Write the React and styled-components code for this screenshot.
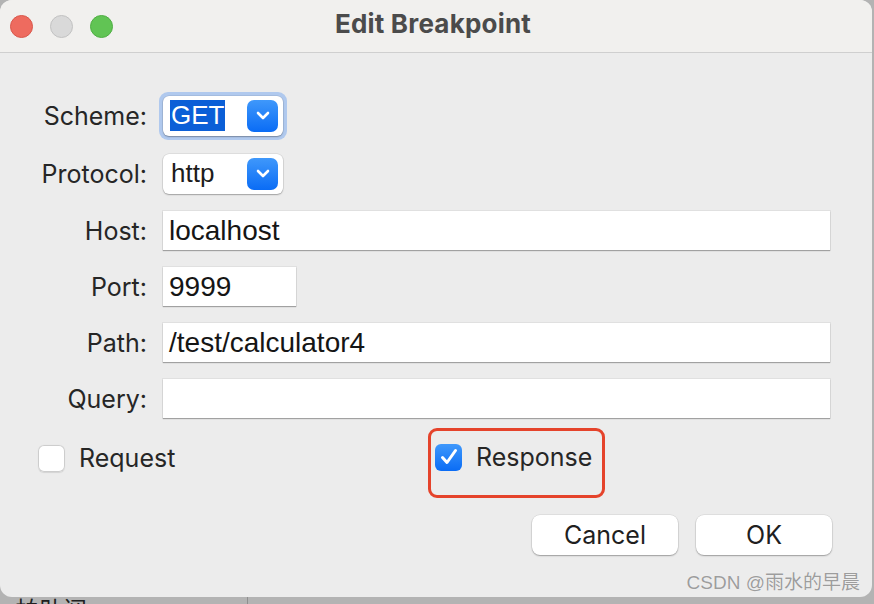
import styled, { createGlobalStyle } from "styled-components";

const GlobalStyle = createGlobalStyle`
  html, body {
    margin: 0;
    padding: 0;
    background: #b3b3b3;
  }
  * {
    box-sizing: border-box;
  }
`;

const Screen = styled.div`
  width: 874px;
  height: 604px;
  overflow: hidden;
  display: flex;
  flex-direction: column;
  background: #b3b3b3;
  font-family: Inter, "Liberation Sans", sans-serif;
`;

const Window = styled.div`
  position: relative;
  width: 872px;
  height: 597px;
  flex-shrink: 0;
  background: #ececec;
  border-radius: 12px;
  overflow: hidden;
  display: flex;
  flex-direction: column;
`;

const TitleBar = styled.div`
  height: 53px;
  flex-shrink: 0;
  display: grid;
  grid-template-columns: 1fr auto 1fr;
  align-items: center;
  background: #f1f0ee;
  border-bottom: 1px solid #cfcfcf;
  padding: 0 10px;
`;

const Lights = styled.div`
  display: flex;
  gap: 17px;
  align-items: center;
`;

const Light = styled.span`
  width: 23px;
  height: 23px;
  border-radius: 50%;
  background: ${(p) => p.$bg};
  border: 1px solid ${(p) => p.$edge};
`;

const Title = styled.div`
  font-size: 26px;
  font-weight: 700;
  color: #4b4b4b;
  margin-top: -5px;
  margin-left: -6px;
  letter-spacing: 0.2px;
`;

const Form = styled.div`
  display: grid;
  grid-template-columns: 131px 667px;
  column-gap: 16px;
  row-gap: 17px;
  padding: 42px 0 0 16px;
  align-items: center;
`;

const Label = styled.label`
  font-size: 25px;
  color: #262626;
  text-align: right;
  white-space: nowrap;
`;

const Control = styled.div`
  height: ${(p) => p.$h || 39}px;
  display: flex;
  align-items: center;
`;

const FocusRing = styled.div`
  display: flex;
  padding: 4px;
  margin: -4px;
  border-radius: 9px;
  background: ${(p) => (p.$focus ? "#b0c9ee" : "transparent")};
`;

const PopUp = styled.div`
  width: 120px;
  height: 40px;
  background: #fff;
  border-radius: 6px;
  box-shadow: 0 1px 1.5px rgba(0, 0, 0, 0.28), 0 0 0 0.5px rgba(0, 0, 0, 0.12);
  display: flex;
  align-items: center;
  justify-content: space-between;
  padding: 0 5px 0 7px;
`;

const PopText = styled.span`
  font-family: "Liberation Sans", Arial, sans-serif;
  font-size: 26px;
  line-height: 31px;
  color: ${(p) => (p.$selected ? "#fff" : "#1c1c1c")};
  background: ${(p) => (p.$selected ? "#0b5fd7" : "transparent")};
  padding: 0 1px;
`;

const Chevron = styled.span`
  width: 31px;
  height: 32px;
  border-radius: 7px;
  background: linear-gradient(#3f98fb, #0a6cf5);
  display: flex;
  align-items: center;
  justify-content: center;
`;

const Field = styled.div`
  width: ${(p) => p.$w || "100%"};
  height: 39px;
  background: #fff;
  box-shadow: 0 1px 1px rgba(0, 0, 0, 0.28), 0 0 0 1px rgba(0, 0, 0, 0.05);
  display: flex;
  align-items: center;
  padding-left: 6px;
  font-family: "Liberation Sans", Arial, sans-serif;
  font-size: 28px;
  color: #151515;
`;

const CheckRow = styled.div`
  display: grid;
  grid-template-columns: 390px auto;
  justify-content: start;
  align-items: start;
  padding: 10px 0 0 38px;
`;

const CheckItem = styled.div`
  display: flex;
  align-items: center;
  gap: 14px;
  margin-top: ${(p) => p.$top || 0}px;
  font-size: 25px;
  color: #262626;
`;

const Box = styled.span`
  width: 27px;
  height: 27px;
  border-radius: 6px;
  display: flex;
  align-items: center;
  justify-content: center;
  background: ${(p) => (p.$on ? "linear-gradient(#3f98fb, #0a6cf5)" : "#fff")};
  box-shadow: ${(p) =>
    p.$on ? "none" : "inset 0 0 0 1px #cdcdcd, 0 0.5px 1px rgba(0,0,0,0.1)"};
`;

const Highlight = styled.div`
  justify-self: start;
  border: 3.5px solid #e5432b;
  border-radius: 9px;
  padding: 11px 10px 23px 4px;
`;

const Buttons = styled.div`
  display: flex;
  justify-content: flex-end;
  gap: 18px;
  padding: 17px 40px 0 0;
`;

const Button = styled.button`
  width: ${(p) => p.$w}px;
  height: 40px;
  border: none;
  border-radius: 8px;
  background: #fff;
  box-shadow: 0 1px 1.5px rgba(0, 0, 0, 0.3), 0 0 0 0.5px rgba(0, 0, 0, 0.1);
  font-family: Inter, "Liberation Sans", sans-serif;
  font-size: 25px;
  color: #1f1f1f;
`;

const Watermark = styled.div`
  position: absolute;
  right: 12px;
  bottom: 3px;
  font-family: "Liberation Sans", "Noto Sans CJK SC", sans-serif;
  font-size: 19px;
  color: #9d9d9d;
  text-shadow: 0 0 1px #fff;
`;

const Backdrop = styled.div`
  flex: 1;
  display: grid;
  grid-template-columns: 248px 1fr;
`;

const Sidebar = styled.div`
  border-right: 1px solid #8f8f8f;
  overflow: hidden;
  padding-left: 15px;
  font-family: "Noto Sans CJK SC", sans-serif;
  font-size: 24px;
  line-height: 1;
  color: #202020;
`;

const ChevronDown = () => (
  <svg width="14" height="9" viewBox="0 0 14 9">
    <path
      d="M2 2 L7 7 L12 2"
      fill="none"
      stroke="#fff"
      strokeWidth="2.6"
      strokeLinecap="round"
      strokeLinejoin="round"
    />
  </svg>
);

const Check = () => (
  <svg width="20" height="20" viewBox="0 0 20 20">
    <path
      d="M3.5 10.5 L8 15.5 L16.5 3.5"
      fill="none"
      stroke="#fff"
      strokeWidth="3"
      strokeLinecap="round"
      strokeLinejoin="round"
    />
  </svg>
);

const App = () => {
  return (
    <>
      <GlobalStyle />
      <Screen>
        <Window>
          <TitleBar>
            <Lights>
              <Light $bg="#ee6b5f" $edge="#d9574b" />
              <Light $bg="#d9d9d9" $edge="#c2c2c2" />
              <Light $bg="#61c454" $edge="#4fae43" />
            </Lights>
            <Title>Edit Breakpoint</Title>
            <span />
          </TitleBar>

          <Form>
            <Label>Scheme:</Label>
            <Control $h={41}>
              <FocusRing $focus>
                <PopUp>
                  <PopText $selected>GET</PopText>
                  <Chevron>
                    <ChevronDown />
                  </Chevron>
                </PopUp>
              </FocusRing>
            </Control>

            <Label>Protocol:</Label>
            <Control $h={41}>
              <PopUp>
                <PopText>http</PopText>
                <Chevron>
                  <ChevronDown />
                </Chevron>
              </PopUp>
            </Control>

            <Label>Host:</Label>
            <Control>
              <Field>localhost</Field>
            </Control>

            <Label>Port:</Label>
            <Control>
              <Field $w="133px">9999</Field>
            </Control>

            <Label>Path:</Label>
            <Control>
              <Field>/test/calculator4</Field>
            </Control>

            <Label>Query:</Label>
            <Control>
              <Field />
            </Control>
          </Form>

          <CheckRow>
            <CheckItem $top={15}>
              <Box />
              Request
            </CheckItem>
            <Highlight>
              <CheckItem>
                <Box $on>
                  <Check />
                </Box>
                Response
              </CheckItem>
            </Highlight>
          </CheckRow>

          <Buttons>
            <Button $w={146}>Cancel</Button>
            <Button $w={136}>OK</Button>
          </Buttons>

          <Watermark>CSDN @雨水的早晨</Watermark>
        </Window>
        <Backdrop>
          <Sidebar>帕助阅</Sidebar>
          <div />
        </Backdrop>
      </Screen>
    </>
  );
};

export default App;
